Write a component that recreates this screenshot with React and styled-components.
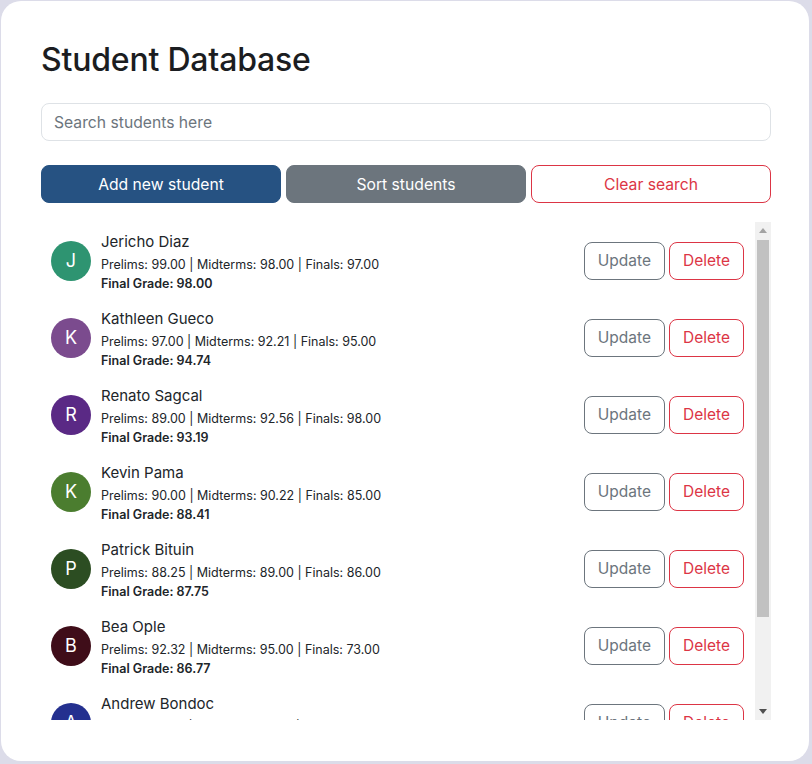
import React from 'react';
import styled, { createGlobalStyle } from 'styled-components';

const GlobalStyle = createGlobalStyle`
  html, body {
    margin: 0;
    padding: 0;
    background: #dcdce9;
    font-family: Inter, "Noto Sans", sans-serif;
    color: #212529;
  }
  * { box-sizing: border-box; }
`;

const Page = styled.div`
  padding: 1px;
  width: 812px;
  height: 764px;
`;

const Card = styled.div`
  background: #fff;
  border-radius: 20px;
  height: 760px;
  width: 808px;
  padding: 40px 38px 40px 40px;
  display: flex;
  flex-direction: column;
`;

const Title = styled.h1`
  margin: 0 0 24px;
  font-size: 32px;
  font-weight: 500;
  line-height: 38px;
  letter-spacing: -0.2px;
  color: #1b1d21;
`;

const Search = styled.input`
  width: 100%;
  height: 38px;
  border: 1px solid #dee2e6;
  border-radius: 8px;
  padding: 0 12px;
  font-family: inherit;
  font-size: 15.7px;
  color: #212529;
  outline: none;
  &::placeholder { color: #6c757d; }
`;

const Actions = styled.div`
  display: grid;
  grid-template-columns: repeat(3, 1fr);
  gap: 5px;
  margin: 24px 0 19px;
`;

const ActionButton = styled.button`
  height: 38px;
  border-radius: 8px;
  font-family: inherit;
  font-size: 15.7px;
  border: 1px solid ${(p) => p.$border};
  background: ${(p) => p.$bg};
  color: ${(p) => p.$color};
`;

const ListFrame = styled.div`
  height: 498px;
  display: flex;
`;

const ListBody = styled.div`
  flex: 1;
  overflow: hidden;
`;

const ScrollTrack = styled.div`
  width: 16px;
  background: #f1f1f1;
  display: flex;
  flex-direction: column;
  align-items: center;
`;

const ScrollArrow = styled.div`
  height: 17px;
  width: 16px;
  display: flex;
  align-items: center;
  justify-content: center;
`;

const ScrollRail = styled.div`
  flex: 1;
  width: 100%;
  padding: 1px 2px 0;
`;

const ScrollThumb = styled.div`
  height: 377px;
  background: #c1c1c1;
`;

const Item = styled.div`
  display: flex;
  align-items: center;
  height: 77px;
  padding: 0 11px 0 10px;
`;

const Avatar = styled.div`
  width: 40px;
  height: 40px;
  border-radius: 50%;
  background: ${(p) => p.$color};
  color: #fff;
  display: flex;
  align-items: center;
  justify-content: center;
  font-size: 18px;
  flex-shrink: 0;
  margin-right: 10px;
`;

const Info = styled.div`
  flex: 1;
  display: flex;
  flex-direction: column;
`;

const Name = styled.div`
  font-size: 15px;
  line-height: 24px;
  margin-top: 1px;
`;

const Scores = styled.div`
  font-size: 12.5px;
  line-height: 19px;
  margin-top: 1px;
`;

const Final = styled.div`
  font-size: 12.5px;
  line-height: 19px;
  font-weight: 600;
`;

const Buttons = styled.div`
  display: flex;
  gap: 4px;
`;

const SmallButton = styled.button`
  height: 38px;
  padding: 0 13px;
  border-radius: 8px;
  background: #fff;
  font-family: inherit;
  font-size: 15.5px;
  border: 1px solid ${(p) => p.$color};
  color: ${(p) => p.$color};
`;

const students = [
  { name: 'Jericho Diaz', p: '99.00', m: '98.00', f: '97.00', g: '98.00', c: '#2e9471' },
  { name: 'Kathleen Gueco', p: '97.00', m: '92.21', f: '95.00', g: '94.74', c: '#7b4b8e' },
  { name: 'Renato Sagcal', p: '89.00', m: '92.56', f: '98.00', g: '93.19', c: '#5a2985' },
  { name: 'Kevin Pama', p: '90.00', m: '90.22', f: '85.00', g: '88.41', c: '#4b7d2f' },
  { name: 'Patrick Bituin', p: '88.25', m: '89.00', f: '86.00', g: '87.75', c: '#2c4d22' },
  { name: 'Bea Ople', p: '92.32', m: '95.00', f: '73.00', g: '86.77', c: '#3f0d19' },
  { name: 'Andrew Bondoc', p: '78.00', m: '74.00', f: '90.00', g: '81.40', c: '#24308f' },
  { name: 'Mika Santos', p: '80.00', m: '78.50', f: '75.00', g: '77.67', c: '#8a5a1f' },
];

export default function App() {
  return (
    <Page>
      <GlobalStyle />
      <Card>
        <Title>Student Database</Title>
        <Search placeholder="Search students here" />
        <Actions>
          <ActionButton $bg="#265282" $border="#265282" $color="#fff">Add new student</ActionButton>
          <ActionButton $bg="#6c757d" $border="#6c757d" $color="#fff">Sort students</ActionButton>
          <ActionButton $bg="#fff" $border="#dc3545" $color="#dc3545">Clear search</ActionButton>
        </Actions>
        <ListFrame>
          <ListBody>
            {students.map((s) => (
              <Item key={s.name}>
                <Avatar $color={s.c}>{s.name[0]}</Avatar>
                <Info>
                  <Name>{s.name}</Name>
                  <Scores>
                    Prelims: {s.p} | Midterms: {s.m} | Finals: {s.f}
                  </Scores>
                  <Final>Final Grade: {s.g}</Final>
                </Info>
                <Buttons>
                  <SmallButton $color="#6c757d">Update</SmallButton>
                  <SmallButton $color="#dc3545">Delete</SmallButton>
                </Buttons>
              </Item>
            ))}
          </ListBody>
          <ScrollTrack>
            <ScrollArrow>
              <svg width="8" height="5" viewBox="0 0 8 5">
                <polygon points="0,5 8,5 4,0" fill="#a3a3a3" />
              </svg>
            </ScrollArrow>
            <ScrollRail>
              <ScrollThumb />
            </ScrollRail>
            <ScrollArrow>
              <svg width="8" height="5" viewBox="0 0 8 5">
                <polygon points="0,0 8,0 4,5" fill="#505050" />
              </svg>
            </ScrollArrow>
          </ScrollTrack>
        </ListFrame>
      </Card>
    </Page>
  );
}
